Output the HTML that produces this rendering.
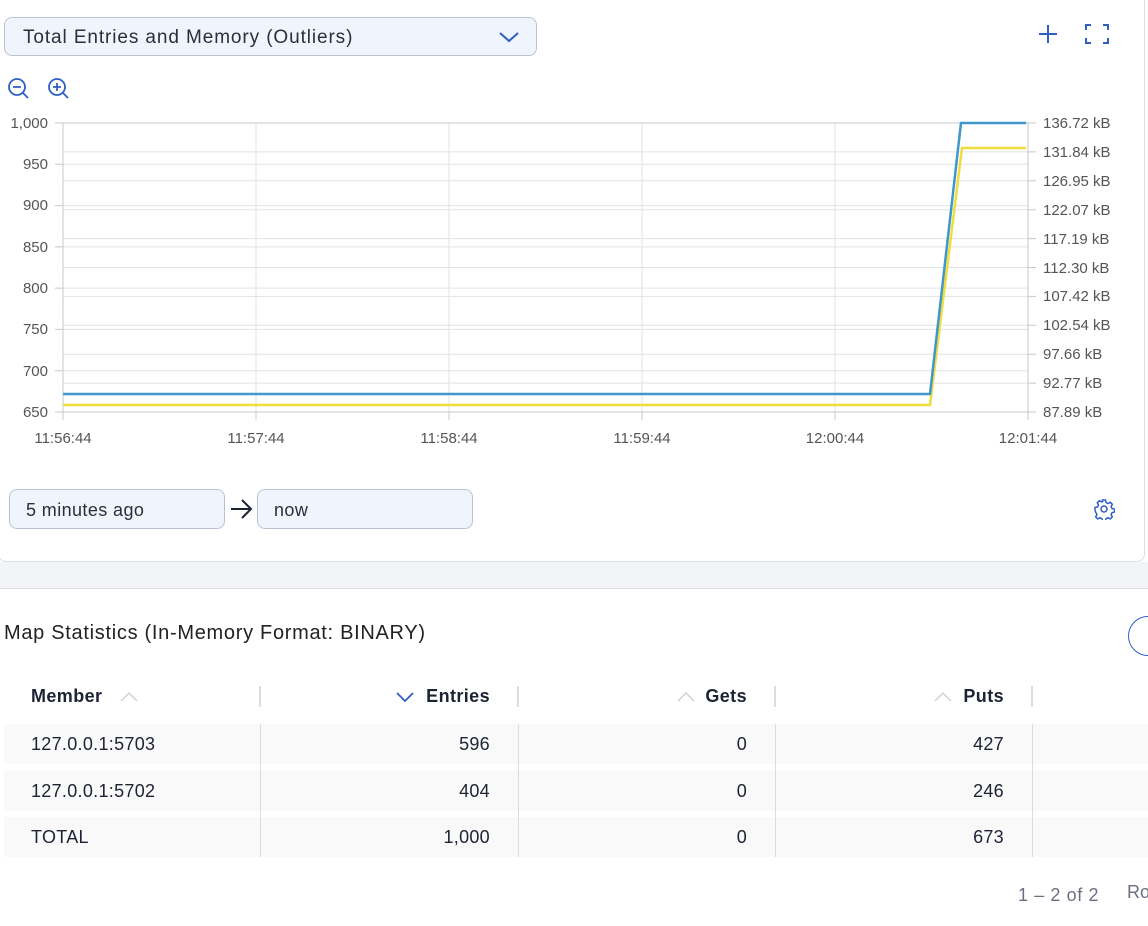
<!DOCTYPE html>
<html><head><meta charset="utf-8"><style>
*{margin:0;padding:0;box-sizing:border-box}
body{width:1148px;height:926px;overflow:hidden;background:#fff;font-family:"Liberation Sans",sans-serif;position:relative;color:#1c2333}
.abs{position:absolute}
.card{left:-2px;top:-10px;width:1147px;height:572px;border:1px solid #dcdfe4;border-radius:8px;background:#fff}
.band{left:0;top:562px;width:1148px;height:27px;background:#f3f4f7;border-bottom:1px solid #dcdfe4}
.sel{left:4px;top:17px;width:533px;height:39px;border:1px solid #b9c2d3;border-radius:8px;background:#eff4fd;font-size:19px;padding:9px 18px;color:#2a2f38;letter-spacing:0.9px}
.inp{height:40px;border:1px solid #b9c2d3;border-radius:8px;background:#eff4fd;font-size:18px;padding:10px 16px;color:#2a2f38;letter-spacing:0.4px}
.row{left:4px;width:1144px;height:40px;background:#f9f9f9}
.cell{font-size:18px;color:#1c2333;letter-spacing:0.3px}
.hd{font-size:18px;font-weight:bold;color:#1c2333;top:686px;letter-spacing:0.4px}
.sep{width:2px;background:#dcdcdc}
</style></head><body>
<div class="abs card"></div>
<div class="abs band"></div>
<div class="abs sel">Total Entries and Memory (Outliers)</div>
<svg class="abs" style="left:498px;top:29px" width="22" height="16"><path d="M2 4 L11 12 L20 4" fill="none" stroke="#2f5fc4" stroke-width="2"/></svg>
<svg class="abs" style="left:1036px;top:22px" width="24" height="24"><path d="M12 3V21M3 12H21" stroke="#2f5fc4" stroke-width="2"/></svg>
<svg class="abs" style="left:1084px;top:22px" width="26" height="24"><path d="M2 8V3H7M19 3H24V8M24 16V21H19M7 21H2V16" fill="none" stroke="#2f5fc4" stroke-width="2"/></svg>
<svg class="abs" style="left:6px;top:77px" width="70" height="24"><g fill="none" stroke="#2f5fc4" stroke-width="1.8"><circle cx="11" cy="10" r="8"/><path d="M7 10H15M17 16L22 21"/><circle cx="51" cy="10" r="8"/><path d="M47 10H55M51 6V14M57 16L62 21"/></g></svg>
<svg class="abs" style="left:0;top:110px" width="1148" height="345" font-family="Liberation Sans" font-size="15" fill="#555">
<g stroke="#e2e2e2" stroke-width="1">
<path d="M63 54.3H1028M63 95.6H1028M63 136.9H1028M63 178.1H1028M63 219.4H1028M63 260.7H1028"/>
<path d="M63 41.9H1028M63 70.8H1028M63 99.7H1028M63 128.6H1028M63 157.5H1028M63 186.4H1028M63 215.3H1028M63 244.2H1028M63 273.1H1028"/>
<path d="M256 13V302M449 13V302M642 13V302M835 13V302"/>
</g>
<g stroke="#c8c8c8"><path d="M63 13H1028M63 302H1028M63 13V310M1028 13V310"/>
<path d="M55 13H63M55 54.3H63M55 95.6H63M55 136.9H63M55 178.1H63M55 219.4H63M55 260.7H63M55 302H63"/>
<path d="M1028 13h8M1028 41.9h8M1028 70.8h8M1028 99.7h8M1028 128.6h8M1028 157.5h8M1028 186.4h8M1028 215.3h8M1028 244.2h8M1028 273.1h8M1028 302h8"/>
<path d="M256 302V310M449 302V310M642 302V310M835 302V310"/></g>
<g text-anchor="end"><text x="48" y="18">1,000</text><text x="48" y="59">950</text><text x="48" y="100">900</text><text x="48" y="142">850</text><text x="48" y="183">800</text><text x="48" y="224">750</text><text x="48" y="266">700</text><text x="48" y="307">650</text></g>
<g><text x="1043" y="18">136.72 kB</text><text x="1043" y="47">131.84 kB</text><text x="1043" y="76">126.95 kB</text><text x="1043" y="105">122.07 kB</text><text x="1043" y="134">117.19 kB</text><text x="1043" y="163">112.30 kB</text><text x="1043" y="191">107.42 kB</text><text x="1043" y="220">102.54 kB</text><text x="1043" y="249">97.66 kB</text><text x="1043" y="278">92.77 kB</text><text x="1043" y="307">87.89 kB</text></g>
<g text-anchor="middle"><text x="63" y="333">11:56:44</text><text x="256" y="333">11:57:44</text><text x="449" y="333">11:58:44</text><text x="642" y="333">11:59:44</text><text x="835" y="333">12:00:44</text><text x="1028" y="333">12:01:44</text></g>
<path d="M63 295H930L962 38H1026" fill="none" stroke="#f0de3c" stroke-width="2.5"/>
<path d="M63 284H930L961 13H1026" fill="none" stroke="#3f97cc" stroke-width="2.5"/>
</svg>
<div class="abs inp" style="left:9px;top:489px;width:216px">5 minutes ago</div>
<svg class="abs" style="left:229px;top:497px" width="26" height="24"><path d="M2 12H22M13 3L22 12L13 21" fill="none" stroke="#1c2333" stroke-width="2"/></svg>
<div class="abs inp" style="left:257px;top:489px;width:216px">now</div>
<svg class="abs" style="left:1093px;top:498px" width="22" height="22"><g fill="none" stroke="#2f5fc4" stroke-width="1.5"><circle cx="11" cy="11" r="3"/><path d="M9.5 2h3l.5 2.5 2 1 2.3-1.2 2 2-1.2 2.3 1 2 2.5.5v3l-2.5.5-1 2 1.2 2.3-2 2-2.3-1.2-2 1-.5 2.5h-3l-.5-2.5-2-1-2.3 1.2-2-2 1.2-2.3-1-2L2 12.5v-3l2.5-.5 1-2L4.3 4.7l2-2L8.6 3.9l1-.4z"/></g></svg>
<div class="abs" style="left:4px;top:622px;font-size:20px;color:#222;letter-spacing:0.7px">Map Statistics (In-Memory Format: BINARY)</div>
<div class="abs" style="left:1128px;top:616px;width:40px;height:40px;border:1px solid #2f5fc4;border-radius:50%"></div>
<div class="abs hd" style="left:31px">Member</div>
<svg class="abs" style="left:119px;top:690px" width="20" height="14"><path d="M2 11L10 3L18 11" fill="none" stroke="#d0d0d0" stroke-width="1.5"/></svg>
<svg class="abs" style="left:395px;top:690px" width="20" height="14"><path d="M2 3L10 11L18 3" fill="none" stroke="#2f5fc4" stroke-width="1.8"/></svg>
<div class="abs hd" style="right:658px">Entries</div>
<svg class="abs" style="left:676px;top:690px" width="20" height="14"><path d="M2 11L10 3L18 11" fill="none" stroke="#d0d0d0" stroke-width="1.5"/></svg>
<div class="abs hd" style="right:401px">Gets</div>
<svg class="abs" style="left:933px;top:690px" width="20" height="14"><path d="M2 11L10 3L18 11" fill="none" stroke="#d0d0d0" stroke-width="1.5"/></svg>
<div class="abs hd" style="right:144px">Puts</div>
<div class="abs sep" style="left:259px;top:686px;height:21px"></div>
<div class="abs sep" style="left:517px;top:686px;height:21px"></div>
<div class="abs sep" style="left:774px;top:686px;height:21px"></div>
<div class="abs sep" style="left:1031px;top:686px;height:21px"></div>
<div class="abs row" style="top:724px"></div>
<div class="abs row" style="top:771px"></div>
<div class="abs row" style="top:817px"></div>
<div class="abs" style="left:260px;top:724px;width:1px;height:133px;background:#dcdcdc"></div>
<div class="abs" style="left:518px;top:724px;width:1px;height:133px;background:#dcdcdc"></div>
<div class="abs" style="left:775px;top:724px;width:1px;height:133px;background:#dcdcdc"></div>
<div class="abs" style="left:1032px;top:724px;width:1px;height:133px;background:#dcdcdc"></div>
<div class="abs cell" style="left:31px;top:734px">127.0.0.1:5703</div>
<div class="abs cell" style="left:31px;top:781px">127.0.0.1:5702</div>
<div class="abs cell" style="left:31px;top:827px">TOTAL</div>
<div class="abs cell" style="right:658px;top:734px">596</div>
<div class="abs cell" style="right:658px;top:781px">404</div>
<div class="abs cell" style="right:658px;top:827px">1,000</div>
<div class="abs cell" style="right:401px;top:734px">0</div>
<div class="abs cell" style="right:401px;top:781px">0</div>
<div class="abs cell" style="right:401px;top:827px">0</div>
<div class="abs cell" style="right:144px;top:734px">427</div>
<div class="abs cell" style="right:144px;top:781px">246</div>
<div class="abs cell" style="right:144px;top:827px">673</div>
<div class="abs" style="left:1018px;top:885px;font-size:18px;color:#6b7080;letter-spacing:0.6px">1 – 2 of 2</div>
<div class="abs" style="left:1127px;top:882px;font-size:18px;color:#6b7080">Ro</div>
</body></html>
